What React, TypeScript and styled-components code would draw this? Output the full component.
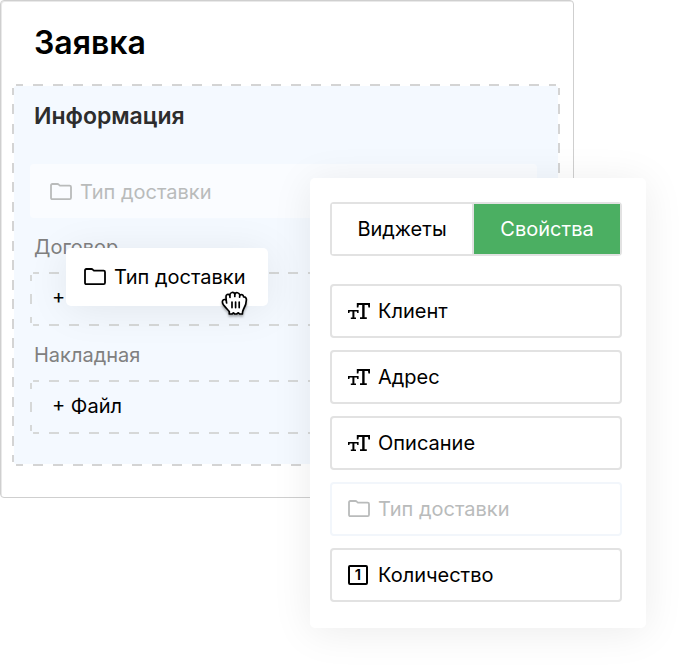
import React from "react";
import styled, { createGlobalStyle, css } from "styled-components";

const GlobalStyle = createGlobalStyle`
  *, *::before, *::after { box-sizing: border-box; }
  body {
    margin: 0;
    background: #fff;
    color: #000;
    font-family: Inter, "Liberation Sans", sans-serif;
    font-size: 20px;
    line-height: 24px;
  }
`;

/* Dashed frame with 10px dashes; `visible` is the part of each corner dash left by the rounding. */
const dashedFrame = (color: string, visible: number, inset: number, columns: number, rows: number, fill: string) => {
  const cut = 10 - visible;
  const line = (angle: string, count: number) =>
    `repeating-linear-gradient(${angle}, ${color} -${cut}px ${visible}px, transparent ${visible}px calc((100% - ${visible - cut}px) / ${count} - ${cut}px))`;
  return css`
    border: 2px solid transparent;
    border-radius: 4px;
    background:
      ${line("90deg", columns)} ${inset}px 0 / calc(100% - ${inset * 2}px) 2px no-repeat border-box,
      ${line("90deg", columns)} ${inset}px 100% / calc(100% - ${inset * 2}px) 2px no-repeat border-box,
      ${line("180deg", rows)} 0 ${inset}px / 2px calc(100% - ${inset * 2}px) no-repeat border-box,
      ${line("180deg", rows)} 100% ${inset}px / 2px calc(100% - ${inset * 2}px) no-repeat border-box,
      linear-gradient(${fill}, ${fill}) padding-box;
  `;
};

const Stage = styled.main`
  position: relative;
  min-height: 669px;
  overflow: hidden;
`;

const Card = styled.section`
  position: relative;
  margin-right: 113px;
  padding: 22px 13px 31px 11px;
  border: 1px solid #cfcfcf;
  border-radius: 4px;
  background: #fff;
  box-shadow: inset 1px 1px 0 #e9e9e9;
`;

const Title = styled.h1`
  margin: 0 0 21px 22px;
  font-size: 32px;
  line-height: 40px;
  font-weight: 600;
`;

const Group = styled.div`
  padding: 16px 21px 30px 16px;
  ${dashedFrame("#d4d4d4", 7, 4, 27, 19, "#f4f9ff")}
`;

const GroupTitle = styled.h2`
  margin: 0 0 34px 4px;
  font-size: 23px;
  line-height: 28px;
  font-weight: 600;
  color: #2d2d2d;
`;

const Ghost = styled.div`
  display: flex;
  align-items: center;
  gap: 8px;
  height: 54px;
  padding: 2px 20px 0;
  border-radius: 4px;
  background: #fafcff;
  color: #b9bbbb;
`;

const FieldLabel = styled.h3`
  margin: 17px 0 13px 4px;
  font-size: 20px;
  line-height: 24px;
  font-weight: 400;
  color: #808080;
`;

const FileButton = styled.button`
  display: block;
  width: 100%;
  height: 54px;
  padding: 0 18px 2px 20px;
  text-align: left;
  font: inherit;
  color: #000;
  cursor: pointer;
  ${dashedFrame("#d6d8d8", 6, 3, 25, 2, "transparent")}
`;

const DragChip = styled.div`
  position: absolute;
  left: 65px;
  top: 247px;
  display: flex;
  align-items: center;
  gap: 8px;
  width: 202px;
  height: 58px;
  padding: 0 18px;
  border-radius: 5px;
  background: #fff;
  box-shadow: 0 4px 40px rgba(0, 0, 0, 0.08);
  white-space: nowrap;
`;

const Cursor = styled.svg`
  position: absolute;
  right: 20px;
  bottom: -12px;
  filter: drop-shadow(0 2px 1px rgba(0, 0, 0, 0.3));
`;

const Panel = styled.aside`
  position: absolute;
  top: 178px;
  right: 41px;
  width: 336px;
  padding: 24px 24px 26px 20px;
  border-radius: 5px;
  background: #fff;
  box-shadow: 0 4px 40px rgba(0, 0, 0, 0.08);
`;

const Tabs = styled.div`
  display: grid;
  grid-template-columns: 142px 1fr;
  height: 54px;
  margin-bottom: 28px;
  border: 2px solid #e2e2e2;
  border-radius: 4px;
`;

const Tab = styled.button<{ $active?: boolean }>`
  padding: 0;
  border: 0;
  border-right: ${(p) => (p.$active ? "0" : "2px solid #e2e2e2")};
  background: ${(p) => (p.$active ? "#4baf62" : "#fff")};
  color: ${(p) => (p.$active ? "#fff" : "#000")};
  font: inherit;
  cursor: pointer;
`;

const PropertyList = styled.ul`
  display: grid;
  gap: 12px;
  margin: 0;
  padding: 0;
  list-style: none;
`;

const Property = styled.button`
  display: flex;
  align-items: center;
  gap: 8px;
  width: 100%;
  height: 54px;
  padding: 0 16px;
  border: 2px solid #e2e2e2;
  border-radius: 4px;
  background: #fff;
  color: #000;
  font: inherit;
  cursor: grab;

  &:disabled {
    border-color: #f2f6fb;
    color: #b9bbbb;
    cursor: default;
  }
`;

const NumberBox = styled.span`
  width: 20px;
  height: 20px;
  margin-right: 2px;
  border: 2px solid currentColor;
  border-radius: 2px;
  font-size: 15px;
  line-height: 16px;
  font-weight: 600;
  text-align: center;
`;

const FolderIcon = () => (
  <svg width="22" height="18" viewBox="0 0 22 18" fill="none" stroke="currentColor" strokeWidth="1.8" strokeLinejoin="round" aria-hidden="true">
    <path d="M1 14.8V2.4Q1 1 2.4 1H7.4Q8.2 1 8.8 1.6L9.9 2.6H19.6Q21 2.6 21 4V14.8Q21 16.2 19.6 16.2H2.4Q1 16.2 1 14.8Z" />
  </svg>
);

const TextIcon = () => (
  <svg width="22" height="17" viewBox="0 0 22 17" fill="currentColor" aria-hidden="true">
    <path d="M8.8 0H22V4.4H20.4L20 1.9H16.6V14.2H18.8V16H12V14.2H14.2V1.9H10.8L10.4 4.4H8.8Z" />
    <path d="M0 7H10.6V10H9.2L8.9 8.5H6.4V14.5H8V16H2.8V14.5H4.4V8.5H1.7L1.4 10H0Z" />
  </svg>
);

const GrabCursor = () => (
  <Cursor width="27" height="27" viewBox="0 0 27 27" fill="none" stroke="#000" strokeWidth="1.7" strokeLinecap="round" strokeLinejoin="round" aria-hidden="true">
    <path
      fill="#fff"
      d="M8.3 23V20.6C6.7 18.7 4.2 16.2 2.4 13.8C1 11.7 1 9.4 2.6 8.7C3.5 8.3 4.4 8.5 5.2 9L5 6C4.8 3.6 7.2 2.6 8.8 4.2C9 1 12.7.5 13.8 3C14.8 1 18.2 1.3 18.8 4.1C20.5 2.9 22.4 3.8 22.6 6C24.4 5.7 25.4 7 25.4 8.7C25.4 12 24.6 14.7 22.6 18C21.8 19.5 21.4 20.7 21.4 23L18.6 23L17.4 21.8L15.6 23H13.8L12.4 21.8L11 23Z"
    />
    <path d="M5.2 9L5.6 12M8.8 4.2L9 6.4M13.8 3V5.4M18.8 4.1L18.6 6.2" />
    <path d="M11 11V16.6M14.6 11V16.6M18.2 11V16.6" />
  </Cursor>
);

export default function App() {
  return (
    <>
      <GlobalStyle />
      <Stage>
        <Card>
          <Title>Заявка</Title>
          <Group>
            <GroupTitle>Информация</GroupTitle>
            <Ghost>
              <FolderIcon />
              Тип доставки
            </Ghost>
            <FieldLabel>Договор</FieldLabel>
            <FileButton type="button">+ Файл</FileButton>
            <FieldLabel>Накладная</FieldLabel>
            <FileButton type="button">+ Файл</FileButton>
          </Group>
          <DragChip>
            <FolderIcon />
            Тип доставки
            <GrabCursor />
          </DragChip>
        </Card>
        <Panel>
          <Tabs role="tablist">
            <Tab type="button" role="tab" aria-selected="false">Виджеты</Tab>
            <Tab type="button" role="tab" aria-selected="true" $active>Свойства</Tab>
          </Tabs>
          <PropertyList>
            <li><Property type="button"><TextIcon />Клиент</Property></li>
            <li><Property type="button"><TextIcon />Адрес</Property></li>
            <li><Property type="button"><TextIcon />Описание</Property></li>
            <li><Property type="button" disabled><FolderIcon />Тип доставки</Property></li>
            <li><Property type="button"><NumberBox aria-hidden="true">1</NumberBox>Количество</Property></li>
          </PropertyList>
        </Panel>
      </Stage>
    </>
  );
}
